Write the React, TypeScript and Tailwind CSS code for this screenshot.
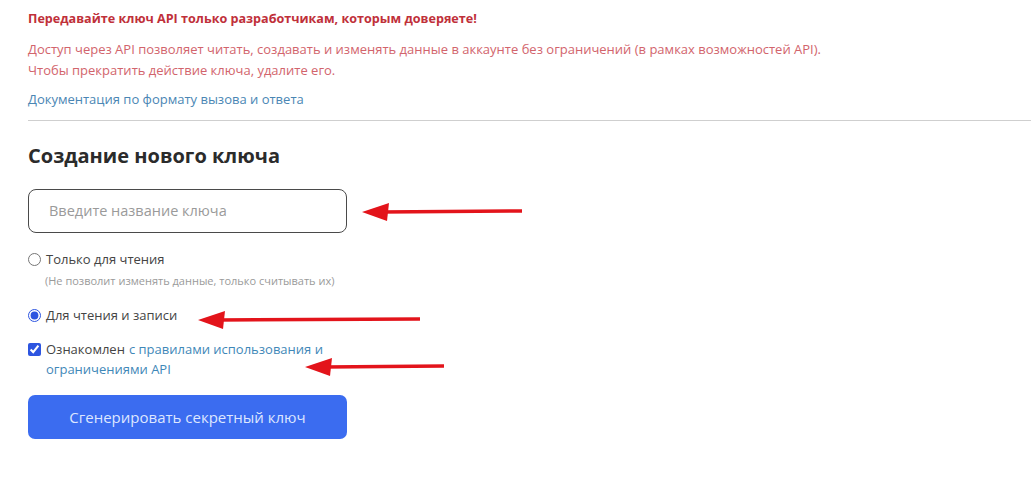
import React, { FC } from 'react'

const Arrow: FC<{ className: string; width: number }> = ({ className, width }) => (
  <svg className={`absolute ${className}`} height="20" viewBox={`0 0 ${width} 20`} width={width}>
    <line stroke="#e3141b" strokeWidth="3.5" x1="20" x2={width} y1="10" y2="9" />
    <polygon fill="#e3141b" points="0,10 27,1 25,19" />
  </svg>
)

const App: FC = () => {
  return (
    <div className="relative h-[479px] w-[1031px] overflow-hidden bg-white font-['Open_Sans',sans-serif]">
      <div className="pl-7 pt-[11px]">
        <p className="text-[12.6px] font-bold leading-[16px] text-[#c0303a]">
          Передавайте ключ API только разработчикам, которым доверяете!
        </p>
        <p className="mt-[12px] text-[13px] leading-[21px] text-[#d2646c]">
          Доступ через API позволяет читать, создавать и изменять данные в аккаунте без ограничений (в рамках
          возможностей API).
          <br />
          Чтобы прекратить действие ключа, удалите его.
        </p>
        <a className="mt-[10px] block text-[13px] leading-[16px] text-[#4a86b4]" href="#">
          Документация по формату вызова и ответа
        </a>
        <div className="mt-[13px] h-px bg-[#cfcfcf]" />

        <h2 className="mt-[22px] text-[20px] font-bold leading-[26px] text-[#2b2b2b]">Создание нового ключа</h2>

        <div className="mt-[20px] flex h-[44px] w-[319px] items-center rounded-[8px] border border-[#4a4a4a] px-[20px]">
          <span className="text-[14.5px] text-[#9a9a9a]">Введите название ключа</span>
        </div>

        <div className="mt-[16px] flex flex-col">
          <label className="flex items-center gap-[5px] text-[13px] leading-[20px] text-[#444]">
            <input className="m-0 h-[13px] w-[13px]" name="mode" type="radio" />
            Только для чтения
          </label>
          <span className="ml-[17px] mt-[5px] text-[11px] leading-[14px] text-[#9a9a9a]">
            (Не позволит изменять данные, только считывать их)
          </span>

          <label className="mt-[17px] flex items-center gap-[5px] text-[13px] leading-[20px] text-[#444]">
            <input className="m-0 h-[13px] w-[13px] accent-[#2d55e0]" defaultChecked name="mode" type="radio" />
            Для чтения и записи
          </label>

          <div className="mt-[14px] flex items-start gap-[5px] text-[13px] leading-[20px] text-[#444]">
            <input className="m-0 mt-[4px] h-[13px] w-[13px] accent-[#2d55e0]" defaultChecked type="checkbox" />
            <div className="flex flex-col">
              <div className="flex gap-[4px]">
                <span>Ознакомлен</span>
                <a className="text-[#3f88b8]" href="#">
                  с правилами использования и
                </a>
              </div>
              <a className="text-[#3f88b8]" href="#">
                ограничениями API
              </a>
            </div>
          </div>
        </div>

        <button className="mt-[16px] h-[44px] w-[319px] rounded-[7px] bg-[#3b6cf0] text-[15px] text-[#dde6ff]">
          Сгенерировать секретный ключ
        </button>
      </div>

      <Arrow className="left-[362px] top-[202px]" width={160} />
      <Arrow className="left-[198px] top-[310px]" width={222} />
      <Arrow className="left-[305px] top-[357px]" width={139} />
    </div>
  )
}

export default App
